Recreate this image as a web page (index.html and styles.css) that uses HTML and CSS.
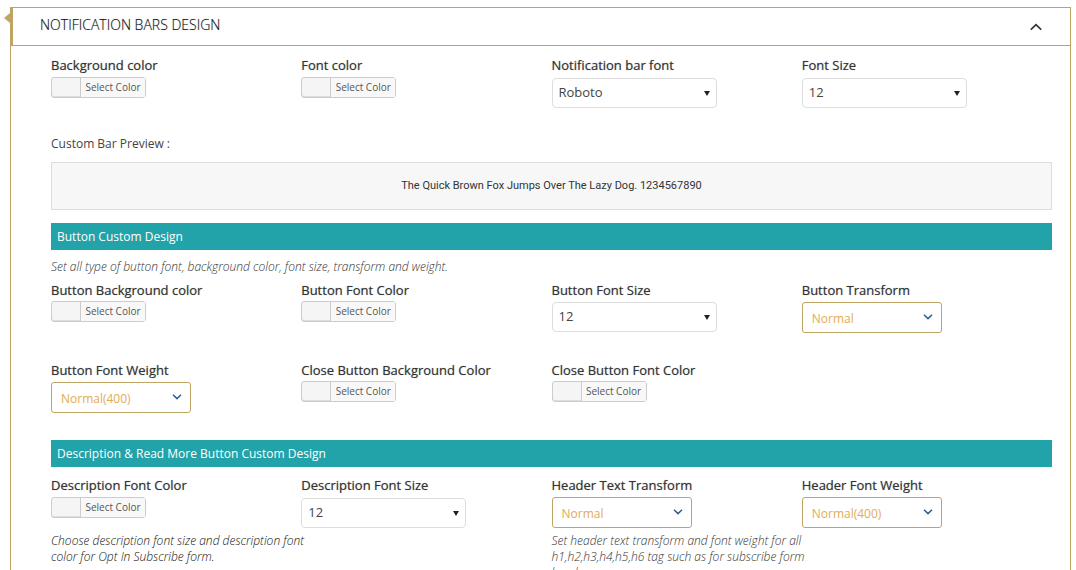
FILE: index.html
```html
<!DOCTYPE html>
<html lang="en">
<head>
<meta charset="utf-8">
<title>Notification Bars Design</title>
<link rel="stylesheet" href="styles.css">
</head>
<body>
<section class="panel">
  <header class="panel-header">
    <h2 class="panel-title">NOTIFICATION BARS DESIGN</h2>
    <button class="panel-toggle" type="button" aria-label="Collapse section">
      <svg width="14" height="8" viewBox="0 0 14 8"><path d="M1.8 6.7 7 1.7l5.2 5" fill="none" stroke="#333" stroke-width="1.6"/></svg>
    </button>
  </header>
  <div class="panel-body">
    <div class="row">
      <div class="field">
        <label class="label" for="bg-color">Background color</label>
        <button class="color" id="bg-color" type="button"><span class="color-text">Select Color</span></button>
      </div>
      <div class="field">
        <label class="label" for="font-color">Font color</label>
        <button class="color" id="font-color" type="button"><span class="color-text">Select Color</span></button>
      </div>
      <div class="field">
        <label class="label" for="bar-font">Notification bar font</label>
        <div class="select"><select class="select-input" id="bar-font"><option>Roboto</option></select></div>
      </div>
      <div class="field">
        <label class="label" for="font-size">Font Size</label>
        <div class="select"><select class="select-input" id="font-size"><option>12</option></select></div>
      </div>
    </div>

    <p class="preview-label">Custom Bar Preview :</p>
    <div class="preview">The Quick Brown Fox Jumps Over The Lazy Dog. 1234567890</div>

    <h3 class="bar">Button Custom Design</h3>
    <p class="note note-wide">Set all type of button font, background color, font size, transform and weight.</p>
    <div class="row row-tight">
      <div class="field">
        <label class="label" for="btn-bg">Button Background color</label>
        <button class="color" id="btn-bg" type="button"><span class="color-text">Select Color</span></button>
      </div>
      <div class="field">
        <label class="label" for="btn-color">Button Font Color</label>
        <button class="color" id="btn-color" type="button"><span class="color-text">Select Color</span></button>
      </div>
      <div class="field">
        <label class="label" for="btn-size">Button Font Size</label>
        <div class="select"><select class="select-input" id="btn-size"><option>12</option></select></div>
      </div>
      <div class="field">
        <label class="label" for="btn-transform">Button Transform</label>
        <div class="gold"><select class="gold-input" id="btn-transform"><option>Normal</option></select><svg class="gold-arrow" width="10" height="6" viewBox="0 0 10 6"><path d="M1 .8 5 4.6 9 .8" fill="none" stroke="#2b6096" stroke-width="1.5"/></svg></div>
      </div>
    </div>
    <div class="row row-tight">
      <div class="field">
        <label class="label" for="btn-weight">Button Font Weight</label>
        <div class="gold"><select class="gold-input" id="btn-weight"><option>Normal(400)</option></select><svg class="gold-arrow" width="10" height="6" viewBox="0 0 10 6"><path d="M1 .8 5 4.6 9 .8" fill="none" stroke="#2b6096" stroke-width="1.5"/></svg></div>
      </div>
      <div class="field">
        <label class="label" for="close-bg">Close Button Background Color</label>
        <button class="color" id="close-bg" type="button"><span class="color-text">Select Color</span></button>
      </div>
      <div class="field">
        <label class="label" for="close-color">Close Button Font Color</label>
        <button class="color" id="close-color" type="button"><span class="color-text">Select Color</span></button>
      </div>
    </div>

    <h3 class="bar">Description &amp; Read More Button Custom Design</h3>
    <div class="row">
      <div class="field">
        <label class="label" for="desc-color">Description Font Color</label>
        <button class="color" id="desc-color" type="button"><span class="color-text">Select Color</span></button>
        <p class="note note-dark note-color">Choose description font size and description font color for Opt In Subscribe form.</p>
      </div>
      <div class="field">
        <label class="label" for="desc-size">Description Font Size</label>
        <div class="select"><select class="select-input" id="desc-size"><option>12</option></select></div>
      </div>
      <div class="field">
        <label class="label" for="head-transform">Header Text Transform</label>
        <div class="gold"><select class="gold-input" id="head-transform"><option>Normal</option></select><svg class="gold-arrow" width="10" height="6" viewBox="0 0 10 6"><path d="M1 .8 5 4.6 9 .8" fill="none" stroke="#2b6096" stroke-width="1.5"/></svg></div>
        <p class="note note-gold">Set header text transform and font weight for all h1,h2,h3,h4,h5,h6 tag such as for subscribe form header.</p>
      </div>
      <div class="field">
        <label class="label" for="head-weight">Header Font Weight</label>
        <div class="gold"><select class="gold-input" id="head-weight"><option>Normal(400)</option></select><svg class="gold-arrow" width="10" height="6" viewBox="0 0 10 6"><path d="M1 .8 5 4.6 9 .8" fill="none" stroke="#2b6096" stroke-width="1.5"/></svg></div>
      </div>
    </div>
  </div>
</section>
</body>
</html>
```
FILE: styles.css
```css
* { box-sizing: border-box; }
body {
  margin: 0;
  padding: 7px 5px 20px 10px;
  background: #fff;
  color: #333;
  font: 13px/20px "Open Sans", sans-serif;
}
h2, h3, p { margin: 0; }
button, select { font-family: inherit; cursor: pointer; }

.panel { border: 1px solid #c0a463; }
.panel-header {
  position: relative;
  display: flex;
  align-items: center;
  justify-content: space-between;
  height: 38px;
  padding: 0 27px 0 29px;
  border-bottom: 1px solid #c0a463;
}
.panel-header::before {
  content: "";
  position: absolute;
  left: -1px;
  top: -1px;
  bottom: -1px;
  width: 3px;
  background: #c0a463;
}
.panel-header::after {
  content: "";
  position: absolute;
  left: -7px;
  top: 5px;
  border: solid transparent;
  border-width: 5px 6px 5px 0;
  border-right-color: #c0a463;
}
.panel-title {
  padding-bottom: 3px;
  color: #111;
  font-size: 14px;
  font-weight: 300;
  line-height: 20px;
  text-shadow: 0 0 1px #aaa;
}
.panel-toggle { display: flex; padding: 0; border: 0; background: none; }
.panel-body { padding: 9px 18px 20px 40px; }

.row { display: grid; grid-template-columns: repeat(4, 1fr); min-height: 80px; }
.label {
  display: block;
  margin-bottom: 2px;
  text-shadow: 0 0 1px #999;
  white-space: nowrap;
}
.row-tight .label { margin-bottom: 1px; }

.color {
  display: flex;
  width: 95px;
  height: 21px;
  padding: 0 0 0 28px;
  border: 1px solid #ccc;
  border-radius: 3px;
  background: #f5f5f5;
  box-shadow: inset 0 -1px 0 #ddd;
}
.color-text {
  flex: 1;
  border-left: 1px solid #ccc;
  background: #f8f8f8;
  color: #555;
  font-size: 10px;
  line-height: 19px;
  text-align: center;
}

.select { position: relative; width: 165px; margin-top: 3px; }
.row-tight .select, .row-tight .gold { margin-top: 2px; }
.select::after {
  content: "";
  position: absolute;
  right: 7px;
  top: 13px;
  border: solid transparent;
  border-width: 5px 3px 0;
  border-top-color: #222;
}
.select-input {
  appearance: none;
  display: block;
  width: 100%;
  height: 30px;
  padding: 0 20px 2px 6px;
  border: 1px solid #ddd;
  border-radius: 4px;
  background: #fff;
  color: #444;
  font-size: 13px;
}

.gold { position: relative; width: 140px; margin-top: 2px; }
.gold-input {
  appearance: none;
  display: block;
  width: 100%;
  height: 31px;
  padding: 1px 24px 0 9px;
  border: 1px solid #c0a463;
  border-radius: 3px;
  background: #fff;
  color: #e3ab55;
  font-size: 12px;
}
.gold-arrow { position: absolute; right: 9px; top: 12px; pointer-events: none; }

.preview-label { margin-bottom: 9px; color: #444; font-size: 12px; line-height: 18px; }
.preview {
  padding: 14px;
  border: 1px solid #ddd;
  background: #f7f7f7;
  font: 11px/18px Roboto, sans-serif;
  text-align: center;
}
.preview + .bar { margin-top: 13px; }

.bar {
  margin-bottom: 8px;
  padding: 4px 6px 3px;
  background: #22a2a9;
  color: #fff;
  font-size: 12px;
  font-weight: 400;
}
.note {
  margin-right: -8px;
  color: #333;
  font-size: 12px;
  font-style: italic;
  font-weight: 300;
  line-height: 16px;
}
.note-wide { margin-bottom: 5px; padding-top: 1px; }
.note-dark { color: #111; }
.note-color { margin-top: 15px; }
.note-gold { margin-top: 5px; }
```
